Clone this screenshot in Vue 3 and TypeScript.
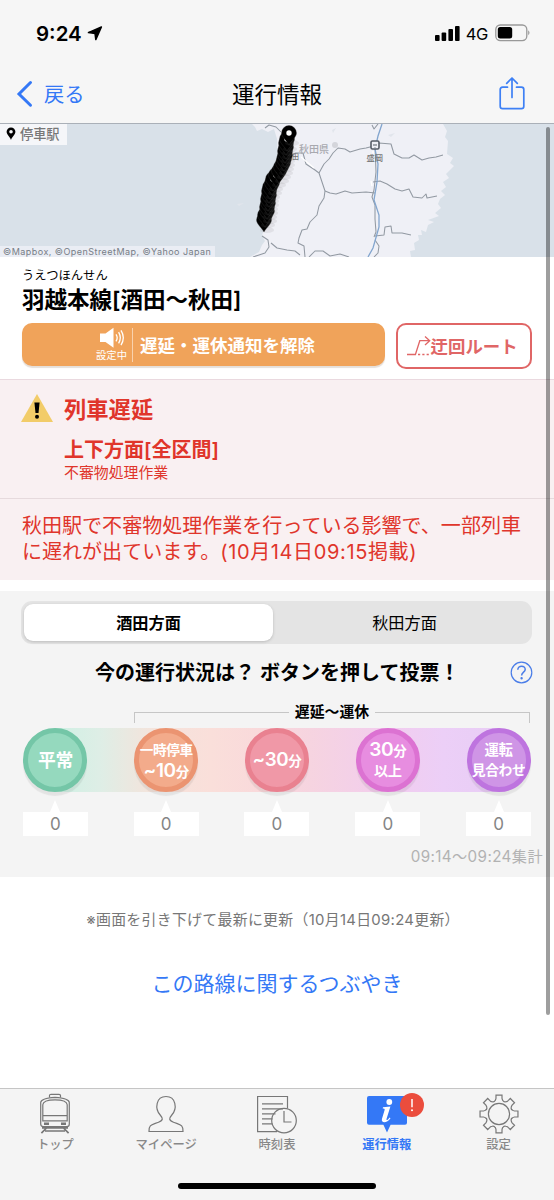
<script setup lang="ts">
interface Vote { lines: { text: string; size: number; suffix?: string }[]; kind: string; count: number }

const votes: Vote[] = [
  { kind: 'normal', count: 0, lines: [{ text: '平常', size: 17.8 }] },
  { kind: 'short', count: 0, lines: [{ text: '一時停車', size: 13.6 }, { text: '~10', size: 19, suffix: '分' }] },
  { kind: 'half', count: 0, lines: [{ text: '~30', size: 18.8, suffix: '分' }] },
  { kind: 'long', count: 0, lines: [{ text: '30', size: 19.2, suffix: '分' }, { text: '以上', size: 14.2 }] },
  { kind: 'stop', count: 0, lines: [{ text: '運転', size: 14.4 }, { text: '見合わせ', size: 13.8 }] },
]

const tabs = [
  { id: 'top', label: 'トップ' },
  { id: 'mypage', label: 'マイページ' },
  { id: 'timetable', label: '時刻表' },
  { id: 'info', label: '運行情報' },
  { id: 'settings', label: '設定' },
]

const stations: [number, number][] = [
  [264, 96], [265, 91], [267, 87], [267, 83], [268, 79], [268, 75], [269, 71], [269, 67], [270, 63], [272, 59],
  [273, 55], [276, 51], [279, 47], [281, 43], [283, 39], [284, 35], [285, 31], [285, 27], [286, 23], [286, 19], [287, 15], [289, 9],
]

const gear = (() => {
  const pts: string[] = []
  for (let i = 0; i < 8; i++) {
    const at = (deg: number, r: number) => {
      const a = ((i * 45 + deg - 90) * Math.PI) / 180
      return `${(20 + r * Math.cos(a)).toFixed(2)} ${(20 + r * Math.sin(a)).toFixed(2)}`
    }
    pts.push(`${i ? 'L' : 'M'}${at(-9, 19.2)} L${at(9, 19.2)} L${at(11, 15.8)} Q${at(13, 14.6)} ${at(16, 14)} Q${at(22.5, 12.6)} ${at(29, 14)} Q${at(32, 14.6)} ${at(34, 15.8)}`)
  }
  return pts.join(' ') + 'Z'
})()
</script>

<template>
  <div class="screen">
    <header>
      <div class="status">
        <span class="time">9:24</span>
        <svg class="loc" width="16" height="16" viewBox="0 0 16 16"><path d="M14.4 2 1.4 7.6 8 8.4 8.8 14.6Z" stroke="#000" stroke-width="1.5" stroke-linejoin="round" /></svg>
        <span class="grow"></span>
        <svg width="26" height="17" viewBox="0 0 26 17"><rect x="1" y="10" width="4.6" height="6" rx="1" /><rect x="7.6" y="7.4" width="4.6" height="8.6" rx="1" /><rect x="14.4" y="4" width="4.6" height="12" rx="1" /><rect x="21" y="1" width="4.6" height="15" rx="1" /></svg>
        <span class="net">4G</span>
        <svg class="battery" width="36" height="18" viewBox="0 0 36 18"><rect x=".8" y="1" width="31" height="15.6" rx="4.5" fill="none" stroke="#999" stroke-width="1.3" /><rect x="2.8" y="3" width="14.4" height="11.6" rx="2.5" /><path d="M33.3 6.3 Q35.6 8.7 33.3 11.2Z" fill="#888" /></svg>
      </div>
      <nav>
        <a class="back">
          <svg width="18" height="28" viewBox="0 0 18 28"><path d="M14.5 2.5 3 14 14.5 25.2" fill="none" stroke="#3478f6" stroke-width="3" stroke-linecap="round" /></svg>
          <span>戻る</span>
        </a>
        <h1>運行情報</h1>
        <svg class="share" width="28" height="36" viewBox="0 0 28 36" fill="none" stroke="#3e80f5" stroke-width="1.7" stroke-linecap="round" stroke-linejoin="round"><path d="M9.5 12.2H4.6Q2.2 12.2 2.2 14.6V31.2Q2.2 33.6 4.6 33.6H23.4Q25.8 33.6 25.8 31.2V14.6Q25.8 12.2 23.4 12.2H18.5" /><path d="M14 22.5V3M8.7 8.4 14 3 19.3 8.4" /></svg>
      </nav>
    </header>

    <section class="map">
      <svg width="554" height="133" viewBox="0 0 554 133">
        <rect width="554" height="133" fill="#d9e1e9" />
        <path d="M252 0 255 3 257 7 262 5 268 8 274 5 277 15 278 40 269 55 264 80 265 100 262 112 265 117 262 121 259 128 250 133H411L410 127 415 126 414 119 419 116 418 111 422 111 421 106 426 108 428 101 434 98 428 96 439 92 435 89 441 84 438 80 440 75 445 71 441 67 446 63 443 58 449 54 446 50 454 42 450 39 453 34 447 30 448 17 445 13 447 7 443 0Z" fill="#eff0f6" />
        <g fill="none" stroke="#9299a2" stroke-width="1.05" stroke-linejoin="round">
          <path d="M265 4 269 1 276 3 281 8M288 34 296 29 303 29 306 40 315 46 319 49 325 67 324 74 319 82 317 91 310 98 307 105 302 106 299 114 298 119 304 122 305 133" />
          <path d="M319 49 324 40 329 35 333 29 338 24 345 25 350 28 360 25 366 24 374 22 379 19 391 20 394 30 402 34 409 34 414 31 422 36 429 34 436 33 443 31" />
          <path d="M325 67 330 69 336 70 345 67 352 69 366 68 375 69" />
          <path d="M372 1 374 5 378 0M375 21 376 48 374 66 372 73 375 81 375 95 376 108 374 113" />
          <path d="M373 58 380 57 387 60 395 65 402 67 409 65 413 73 422 74 426 70 427 74 437 72" />
          <path d="M375 112 384 111 385 103 391 102 392 109 402 109 411 111M375 116 379 122 378 129 374 133" />
          <path d="M277 124 287 126 295 127 300 131M309 133 315 127 323 127 330 132 340 130 349 133M262 112 268 116 269 123 265 129 253 133M271 119 277 124" />
        </g>
        <path d="M314 44 308 39 301 33M373 27 373 36M371 57 372 62" fill="none" stroke="#fff" stroke-width="1.3" />
        <path d="M382 0 378 12 375 25 378 40 377 58 374 76 379 91 379 103 373 124 368 133" fill="none" stroke="#82a5ce" stroke-width="1.3" />
        <path d="M332 6 336 4 333 9ZM388 11 395 9 391 13ZM237 80 244 79 239 82Z" fill="#e1e5ec" />
        <circle cx="335" cy="21" r="3" fill="#d4d5db" />
        <rect x="371" y="17" width="8" height="8" rx="1.4" fill="#eef0f5" stroke="#555c65" stroke-width="1.6" />
        <path d="M373 21H377M375 23.4V24" stroke="#555c65" stroke-width="1.2" />
        <g class="place"><text x="299" y="28.5" font-size="10" textLength="30">秋田県</text><text class="city" x="292" y="35" font-size="7">田</text><text class="city" x="366.5" y="36.5" font-size="8.3">盛岡</text></g>
        <g v-for="(p, i) in stations" :key="i">
          <ellipse :cx="p[0] + 3" :cy="p[1] + 10" rx="7" ry="3" fill="#777" opacity=".12" />
          <path :d="`M${p[0]} ${p[1] + 12}C${p[0] - 2} ${p[1] + 8} ${p[0] - 7.5} ${p[1] + 4} ${p[0] - 7.5} ${p[1]}A7.5 7.5 0 0 1 ${p[0] + 7.5} ${p[1]}C${p[0] + 7.5} ${p[1] + 4} ${p[0] + 2} ${p[1] + 8} ${p[0]} ${p[1] + 12}Z`" stroke="#3a3a3a" stroke-width=".35" />
          <circle :cx="p[0]" :cy="p[1]" r="2.7" fill="#fff" />
        </g>
      </svg>
      <div class="legend">
        <svg width="10" height="14" viewBox="0 0 10 14"><path fill-rule="evenodd" d="M5 13C4 10 .6 7.6 .6 4.8A4.4 4.4 0 0 1 9.4 4.8C9.4 7.6 6 10 5 13ZM5 3A1.8 1.8 0 1 0 5 6.6 1.8 1.8 0 0 0 5 3Z" /></svg>
        <span>停車駅</span>
      </div>
      <div class="credit">©Mapbox, ©OpenStreetMap, ©Yahoo Japan</div>
    </section>

    <section class="line">
      <p class="ruby">うえつほんせん</p>
      <h2>羽越本線[酒田〜秋田]</h2>
      <div class="actions">
        <button class="notify">
          <span class="speaker">
            <svg width="26" height="22" viewBox="0 0 26 22"><path d="M1 6.5H6.5L14.5.8V20.8L6.5 15H1Z" fill="#fff" /><path d="M17 7.3Q19.4 10.8 17 14.3M19.6 5.2Q23 10.8 19.6 16.4M22 3.4Q26.6 10.8 22 18.2" fill="none" stroke="#fff" stroke-width="1.3" /></svg>
            <small>設定中</small>
          </span>
          <span class="rule"></span>
          <b>遅延・運休通知を解除</b>
        </button>
        <button class="detour">
          <svg width="24" height="20" viewBox="0 0 24 20" fill="none" stroke="#e06666" stroke-width="1.3"><path d="M0 18.5H8.4L12.8 4.7H22.3M18 .5 22.7 4.7 18 9" /><path d="M11 18.5H22" stroke-dasharray="2.2 2.1" /></svg>
          <b>迂回ルート</b>
        </button>
      </div>
    </section>

    <section class="alert">
      <div class="summary">
        <svg width="32" height="28" viewBox="0 0 32 28"><path d="M16 0 32 28H0Z" fill="#f2cc69" /><path d="M13.4 8.5H18.6L17.5 19H14.5Z" /><circle cx="16" cy="22.7" r="2" /></svg>
        <div>
          <h3>列車遅延</h3>
          <h4>上下方面[全区間]</h4>
          <p>不審物処理作業</p>
        </div>
      </div>
      <p class="detail">秋田駅で不審物処理作業を行っている影響で、一部列車<br />に遅れが出ています。<span class="stamp">(10月14日09:15掲載)</span></p>
    </section>

    <section class="poll">
      <div class="segment"><span class="on">酒田方面</span><span class="off">秋田方面</span></div>
      <div class="question">
        <h3>今の運行状況は？ ボタンを押して投票！</h3>
        <svg width="23" height="23" viewBox="0 0 23 23" fill="none" stroke="#4a7de8" stroke-width="1.2"><circle cx="11.5" cy="11.5" r="10.3" /><path d="M7.8 8.7C7.8 3.9 15.5 4.1 15.2 8.6 15 11.2 11.6 11.3 11.6 14.6" stroke-width="1.5" /><circle cx="11.6" cy="17.3" r=".6" fill="#4a7de8" /></svg>
      </div>
      <div class="range"><i class="left"></i><b>遅延〜運休</b><i class="right"></i></div>
      <div class="votes">
        <div v-for="v in votes" :key="v.kind" class="vote">
          <button :class="['disc', v.kind]">
            <span v-for="l in v.lines" :key="l.text" class="word" :style="{ fontSize: l.size + 'px' }">{{ l.text }}<small v-if="l.suffix">{{ l.suffix }}</small></span>
          </button>
          <span class="tip"></span>
          <span class="count">{{ v.count }}</span>
        </div>
      </div>
      <p class="total">09:14〜09:24集計</p>
    </section>

    <section class="more">
      <p>※画面を引き下げて最新に更新（10月14日09:24更新）</p>
      <a>この路線に関するつぶやき</a>
    </section>

    <footer>
      <div v-for="t in tabs" :key="t.id" :class="['tab', { active: t.id === 'info' }]">
        <span class="icon">
          <svg v-if="t.id === 'top'" width="40" height="42" viewBox="0 0 40 42" fill="none" stroke="#777" stroke-width="1.2"><path d="M14.5 4.5V2.6Q14.5 1.3 16 1.3H24Q25.5 1.3 25.5 2.6V4.5" /><path d="M5.7 31V9.5Q6 5.3 20 4.4 34 5.3 34.3 9.5V31Q34.3 33.6 31.8 33.6H8.2Q5.7 33.6 5.7 31Z" /><path d="M7.8 27.8V11.8Q8 6.8 20 6.8 32 6.8 32.2 11.8V27.8ZM7.8 22.6H32.2" /><path d="M9 30.8H14M26 30.8H31" stroke-width="2.4" /><path d="M7 34.8H33M12 34.5 6.4 40.2M28 34.5 33.6 40.2M10 38H30" stroke-width="1.7" /></svg>
          <svg v-else-if="t.id === 'mypage'" width="40" height="42" viewBox="0 0 40 42" fill="none" stroke="#777" stroke-width="1.2"><path d="M3 38.5C2.8 31.5 5.5 32 12.5 29.2 17.5 27.3 17 25.3 14.2 22 8.5 15.5 10 3.5 20 3.5S31.5 15.5 25.8 22C23 25.3 22.5 27.3 27.5 29.2 34.5 32 37.2 31.5 37 38.5Z" /></svg>
          <svg v-else-if="t.id === 'timetable'" width="42" height="42" viewBox="0 0 42 42" fill="none" stroke="#777" stroke-width="1.2"><path d="M21 38.6H1.6V3.5H31.5V15.5M6 10.8H27M6 15.8H27M6 20.8H19.5M6 25.8H16.5M6 30.8H16.5" /><circle cx="28" cy="27.6" r="12.3" /><path d="M28 18V29H35.5" /></svg>
          <svg v-else-if="t.id === 'info'" width="64" height="44" viewBox="0 0 64 44"><path d="M14 4H50Q52 4 52 6V30.8Q52 32.8 50 32.8H35.6L32 40.5 28.4 32.8H14Q12 32.8 12 30.8V6Q12 4 14 4Z" fill="#3478f6" /><circle cx="34.3" cy="10" r="2.9" fill="#fff" /><path d="M28 15.3 35.4 14.5 31.5 27Q31.1 28.8 32.7 27.7L34.7 25.5 35.5 26.2C32.2 31.3 25.6 31.5 27 26.7L29.7 17.7Q30 16.5 27.7 16.6Z" fill="#fff" /></svg>
          <svg v-else width="40" height="40" viewBox="0 0 40 40" fill="none" stroke="#777" stroke-width="1.2"><path :d="gear" /><circle cx="20" cy="20" r="10.6" /></svg>
          <svg v-if="t.id === 'info'" class="badge" width="24" height="24" viewBox="0 0 24 24"><circle cx="12" cy="12" r="12" fill="#eb4d3d" /><path d="M12 6V14.2" stroke="#fff" stroke-width="1.5" /><circle cx="12" cy="17.3" r="1" fill="#fff" /></svg>
        </span>
        <span class="label">{{ t.label }}</span>
      </div>
    </footer>
    <div class="home"></div>
    <div class="scroll"></div>
  </div>
</template>

<style>
body { margin: 0; background: #fff; }
</style>

<style scoped>
* { box-sizing: border-box; }
h1, h2, h3, h4, p { margin: 0; }
button { border: 0; padding: 0; font: inherit; color: inherit; background: none; }
svg { display: block; flex: none; }
.screen { position: relative; width: 554px; height: 1200px; overflow: hidden; background: #fff; color: #000; font-family: Inter, "Noto Sans CJK JP", sans-serif; display: flex; flex-direction: column; white-space: nowrap; }
header { height: 124px; background: #f6f6f6; border-bottom: 1px solid #aab0b8; flex: none; }
.status { height: 66px; padding: 0 23px 0 36px; display: flex; align-items: center; }
.time { font-size: 20.5px; font-weight: 600; line-height: 24px; margin-top: 1px; }
.loc { margin: 0 0 0 5px; }
.grow { flex: 1; }
.net { font-size: 16.5px; margin: 1px 7px 0 6px; letter-spacing: -.3px; font-weight: 400; }
nav { height: 57px; display: grid; grid-template-columns: 1fr auto 1fr; align-items: center; padding: 0 28px 0 16px; }
.back { display: flex; align-items: center; color: #3478f6; font-size: 20.3px; line-height: 28px; gap: 10px; font-weight: 400; }
.back svg { margin-top: -1px; }
nav h1 { font-size: 22.5px; line-height: 30px; font-weight: 400; margin-left: 12px; }
.share { justify-self: end; margin-top: -4px; }
.map { position: relative; height: 133px; flex: none; }
.place { font-family: "Noto Sans CJK JP", sans-serif; fill: #a8a9af; font-weight: 500; }
.city { fill: #777; }
.legend { position: absolute; left: 0; top: 0; width: 67px; height: 21px; background: #f5f6f9; display: flex; align-items: center; gap: 4px; padding: 0 0 2px 6px; font-size: 13.2px; color: #777; font-weight: 500; }
.credit { position: absolute; left: 0; bottom: 0; width: 215px; height: 11px; background: #eaedf4; color: #777d86; font-size: 9px; line-height: 11px; padding-left: 3px; letter-spacing: .46px; }
.line { height: 122px; padding: 9px 22px 0; flex: none; }
.ruby { font-size: 12.3px; line-height: 19px; }
.line h2 { font-size: 22.5px; line-height: 29px; font-weight: 600; }
.actions { display: flex; gap: 11px; margin-top: 9px; }
.notify { width: 364px; height: 43px; border-radius: 10px; background: #f0a35a; box-shadow: 0 2px 1px #e5dfda; color: #fff; display: flex; align-items: center; padding-left: 74px; }
.speaker { width: 31px; display: flex; flex-direction: column; align-items: center; }
.speaker small { font-size: 10.3px; line-height: 14px; margin-top: -1px; }
.rule { width: 1px; height: 34px; background: #f9d2ad; margin: 0 7px 0 5px; }
.notify b { font-size: 17.5px; font-weight: 600; }
.detour { width: 137px; height: 46px; border: 2.5px solid #e06666; border-radius: 10px; color: #e06666; display: flex; align-items: center; padding-left: 9px; }
.detour b { font-size: 17.4px; font-weight: 600; margin-top: -1px; }
.alert { height: 201px; background: #f9f0f2; border-top: 1px solid #ead9df; color: #e0352b; flex: none; }
.summary { height: 119px; padding: 14px 21px; border-bottom: 1px solid #e6dadd; display: flex; gap: 11px; }
.summary > div { padding-top: 1px; }
.summary h3 { font-size: 22.3px; line-height: 30px; font-weight: 600; }
.summary h4 { font-size: 20px; line-height: 26px; margin-top: 12px; font-weight: 600; }
.summary p { font-size: 14.9px; line-height: 20px; }
.detail { font-size: 20.05px; line-height: 25.5px; padding: 15px 22px; }
.stamp { letter-spacing: .6px; }
.poll { height: 286px; margin-top: 11px; background: #f4f4f4; padding-top: 10px; flex: none; }
.segment { width: 511px; height: 43px; margin-left: 21px; border-radius: 11px; background: #e4e4e4; display: grid; grid-template-columns: 249px 1fr; padding: 3px; font-size: 16.2px; line-height: 38px; text-align: center; }
.segment .on { background: #fff; border-radius: 9px; font-weight: 600; box-shadow: 0 1px 3px #bbb; height: 37px; }
.segment .off { padding-left: 7px; }
.question { height: 29px; margin: 14px 21px 0 95px; display: flex; align-items: center; justify-content: space-between; }
.question h3 { font-size: 20px; line-height: 28px; font-weight: 600; }
.range { margin: 15px 24px 0 134px; height: 22px; display: flex; align-items: flex-start; justify-content: space-between; }
.range b { font-size: 14.9px; line-height: 20px; font-weight: 600; }
.range i { width: 155px; height: 11px; margin-top: 10px; border: 1px solid #c6c6c6; border-width: 1px 0 0 1px; }
.range .right { border-width: 1px 1px 0 0; }
.votes { display: grid; grid-template-columns: repeat(5, 1fr); margin-top: 4px; background: linear-gradient(90deg, transparent 10%, #cff0e4 10%, #deeee6 18%, #f3e4dc 27%, #fadfda 38%, #f9d9db 47%, #f6d4e0 56%, #f2cdee 70%, #eccff7 80%, #e8cdf5 90%, transparent 90%) 0 0 / 100% 64px no-repeat; }
.vote { display: flex; flex-direction: column; align-items: center; }
.disc { width: 64px; height: 64px; border-radius: 50%; border: 5.5px solid; display: flex; flex-direction: column; align-items: center; justify-content: center; font-weight: 600; box-shadow: 0 4px 1px #0001; }
.word { color: #fff; line-height: 20px; letter-spacing: -.4px; }
.word small { font-size: 13.5px; }
.normal { background: #95d9be; border-color: #74c6a7; }
.normal .word { padding-top: 2px; }
.short { background: #f3ab8b; border-color: #eb9471; }
.short .word:first-child { margin-top: 1px; }
.short .word:last-child { margin-top: 1px; }
.half { background: #f098a7; border-color: #e98190; }
.long { background: #e78de0; border-color: #dc72d2; }
.stop { background: #cf95e6; border-color: #be74df; }
.tip { margin-top: 8px; border: 5px solid transparent; border-top: 0; border-bottom: 12px solid #fff; }
.count { width: 65px; height: 24px; background: #fff; color: #858585; font-size: 17px; line-height: 25px; text-align: center; font-weight: 400; }
.total { text-align: right; padding-right: 11px; margin-top: 10px; font-size: 15.2px; line-height: 22px; color: #b2b2b2; letter-spacing: .4px; }
.more { flex: 1; display: flex; flex-direction: column; align-items: center; padding-top: 32px; }
.more p { font-size: 14.9px; line-height: 22px; color: #777; letter-spacing: .3px; margin-right: 8px; }
.more a { font-size: 21px; line-height: 30px; color: #3478f6; margin-top: 38px; }
footer { height: 112px; background: #f4f4f4; border-top: 1px solid #c5c5c5; display: grid; grid-template-columns: repeat(5, 1fr); flex: none; }
.tab { display: flex; flex-direction: column; align-items: center; color: #888; font-size: 12.3px; }
.icon { position: relative; height: 44px; margin-top: 3px; display: flex; align-items: center; }
.label { line-height: 18px; font-weight: 500; }
.active .icon, .active .label { margin-right: 2px; }
.active .label { color: #3478f6; font-weight: 600; }
.badge { position: absolute; left: 45px; top: 1px; }
.home { position: absolute; left: 178px; bottom: 11px; width: 198px; height: 6px; border-radius: 3px; background: #000; }
.scroll { position: absolute; left: 546px; top: 127px; width: 4px; height: 888px; border-radius: 2px; background: rgba(0, 0, 0, .38); }
</style>
